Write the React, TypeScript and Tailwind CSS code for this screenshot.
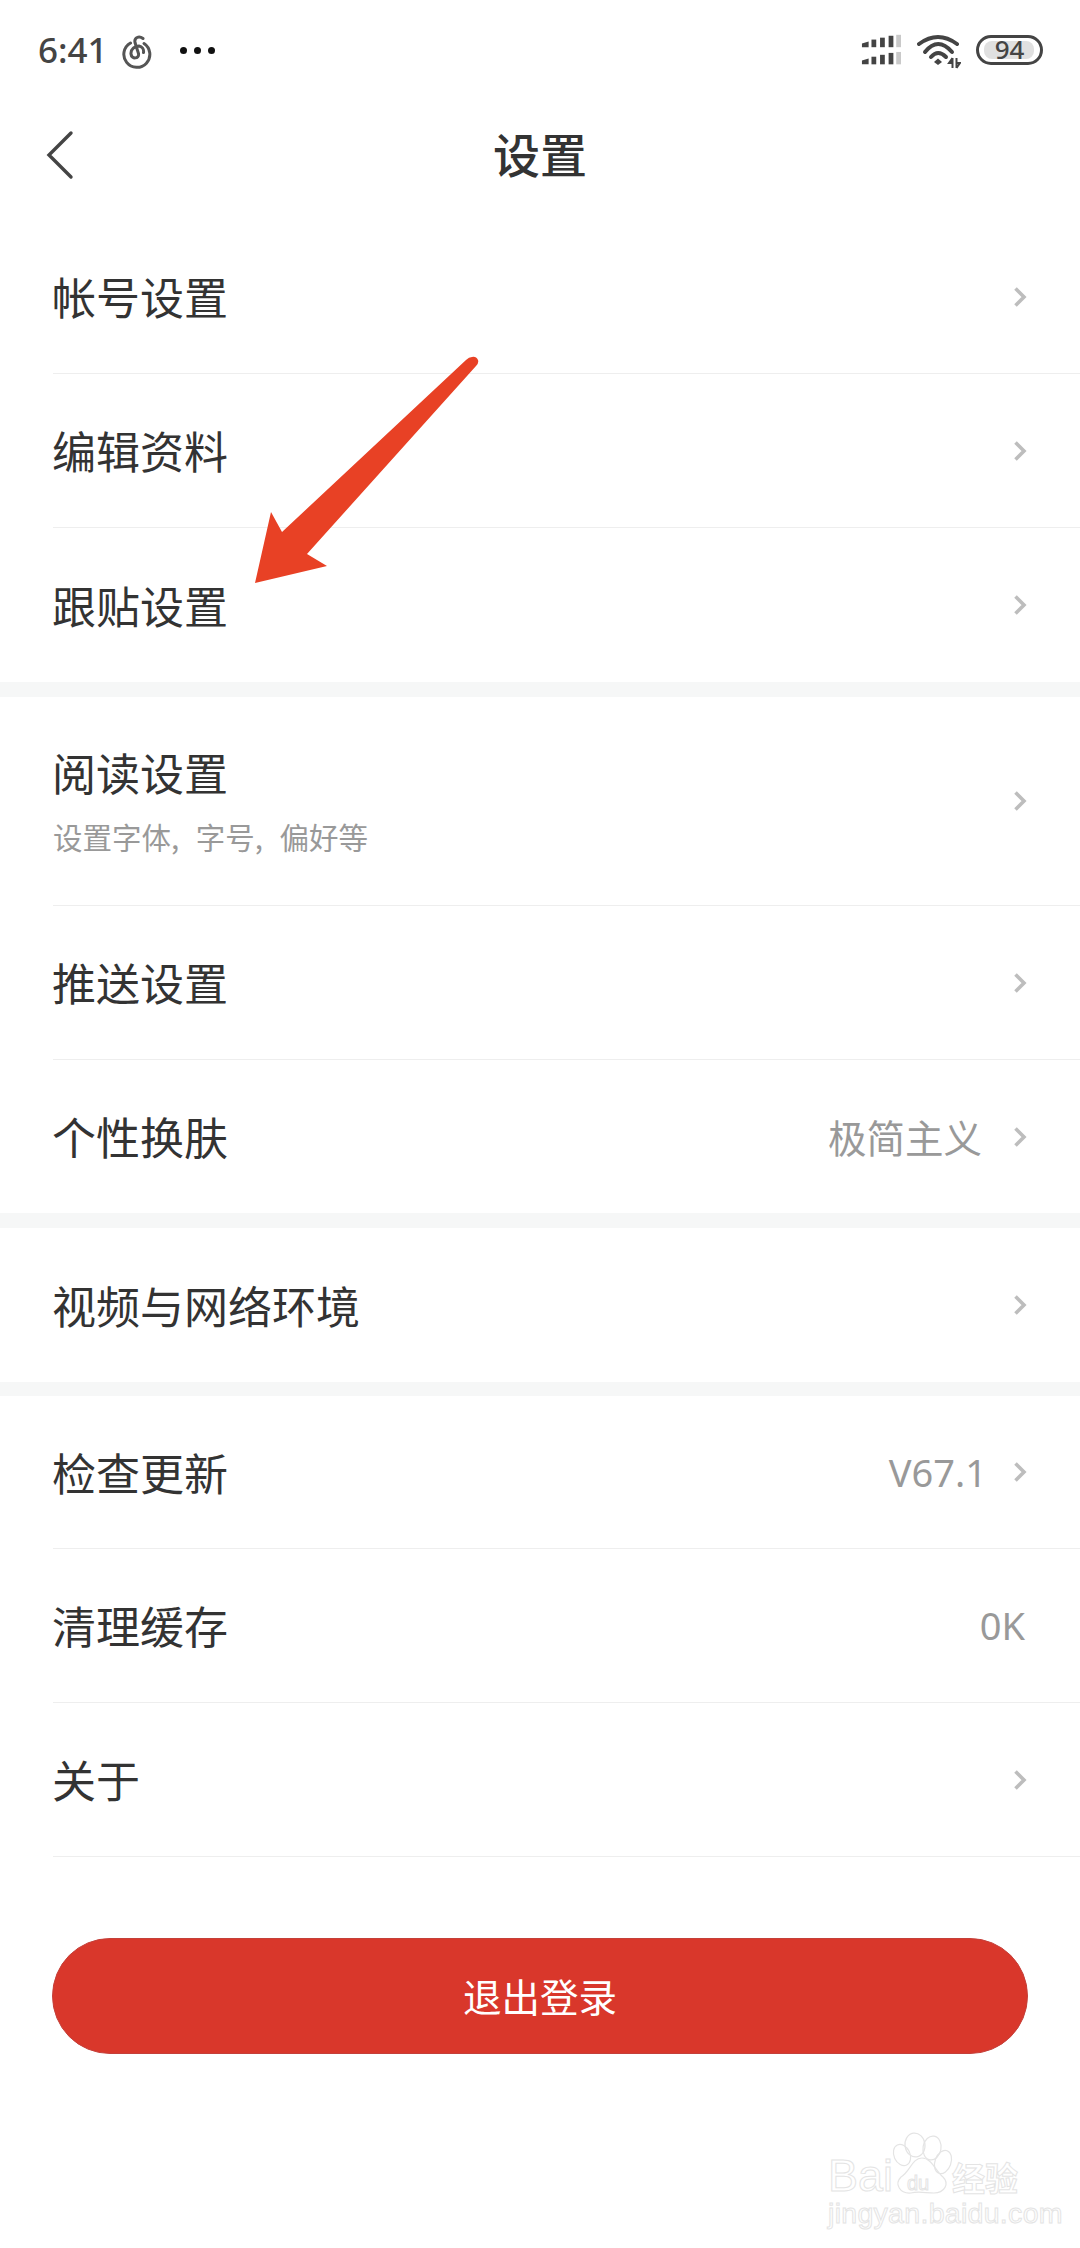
const CJK = "font-['Noto_Sans_CJK_SC','Noto_Sans',sans-serif]";

function Chevron() {
  return (
    <svg width="14" height="22" viewBox="0 0 14 22" fill="none" className="shrink-0">
      <path d="M2.5 2.5 L11 11 L2.5 19.5" stroke="#bdbdbd" strokeWidth="3.6" />
    </svg>
  );
}

function Row({
  title,
  sub,
  value,
  latin,
  noArrow,
  divider = true,
  height = "h-[154px]",
}: {
  title: string;
  sub?: string;
  value?: string;
  latin?: boolean;
  noArrow?: boolean;
  divider?: boolean;
  height?: string;
}) {
  const valueFont = latin
    ? "text-[38px] font-['Noto_Sans',sans-serif]"
    : "text-[38.5px] mr-[31px]";
  const valueGap = latin ? (noArrow ? "mr-[2px]" : "mr-[26px]") : "";
  return (
    <div className={`pl-[53px] ${height}`}>
      <div className={`h-full flex items-center pr-[53px] ${divider ? "border-b border-[#eeeeee]" : ""}`}>
        <div className={`flex-1 ${sub ? "pb-[3px]" : "pb-[1px]"}`}>
          <div className="text-[44px] leading-[60px] ml-[-1px] text-[#333333]">{title}</div>
          {sub && (
            <div className="text-[29.5px] leading-[44px] mt-[12px] text-[#999999] [word-spacing:10px]">{sub}</div>
          )}
        </div>
        {value && <span className={`text-[#999999] ${valueFont} ${valueGap}`}>{value}</span>}
        {!noArrow && <Chevron />}
      </div>
    </div>
  );
}

function Band({ height = "h-[15px]" }: { height?: string }) {
  return <div className={`${height} bg-[#f6f7f7]`} />;
}

function StatusBar() {
  return (
    <div className="h-[100px] flex items-center pl-[38px] pr-[37px]">
      <span className="text-[35px] font-medium text-[#444444] font-['Noto_Sans',sans-serif]">6:41</span>
      <svg width="30" height="34" viewBox="0 0 30 34" fill="none" className="ml-[14px] mt-[3px]">
        <path
          d="M8.5 8 A13 13 0 1 0 22 8.5 M21 3.5 C17 0.5 12 2.5 13 7.5 L16.5 18.5 C17.5 24 9.5 24.5 9 19 C8.5 14 13 11 17 11 C20 11.5 22 14 21.5 17.5"
          stroke="#555555"
          strokeWidth="3"
          strokeLinecap="round"
        />
      </svg>
      <div className="ml-[28px] flex gap-[7px]">
        <i className="block w-[7px] h-[7px] rounded-full bg-[#111111]" />
        <i className="block w-[7px] h-[7px] rounded-full bg-[#111111]" />
        <i className="block w-[7px] h-[7px] rounded-full bg-[#111111]" />
      </div>
      <div className="flex-1" />
      <svg width="40" height="34" viewBox="0 0 42 34" className="mt-[2px]">
        {[0, 18].map((y) => (
          <g key={y}>
            <path d={`M1 ${y + 9} L8 ${y + 7} V${y + 13} H1 Z`} fill="#444444" />
            <rect x="11" y={y + 5} width="5" height="8" fill="#444444" />
            <rect x="20" y={y + 3} width="5" height="10" fill="#444444" />
            <rect x="29" y={y + 1} width="5" height="12" fill="#444444" />
            <rect x="37" y={y} width="5" height="13" fill="#c9c9c9" />
          </g>
        ))}
      </svg>
      <svg width="44" height="36" viewBox="0 0 44 36" fill="none" className="ml-[16px] mt-[2px]">
        <path d="M2 11 Q21 -3 40 11" stroke="#444444" strokeWidth="4" strokeLinecap="round" />
        <path d="M8 19 Q21 3 35 19" stroke="#444444" strokeWidth="4" strokeLinecap="round" />
        <path d="M14 24 Q21 16 29 24" stroke="#444444" strokeWidth="4" strokeLinecap="round" />
        <path d="M17 29 L21 25.5 L25 29 L21 32 Z" fill="#444444" />
        <path d="M35.5 25 V35 M35.5 25 L32 30 H35.5 M39.5 35 V25 M39.5 35 L43 30 H39.5" stroke="#444444" strokeWidth="2" />
      </svg>
      <div className="ml-[15px] mt-[-1px] w-[67px] h-[30px] rounded-full border-[3px] border-[#444444] p-[3px] relative">
        <div className="h-full w-[90%] ml-[2px] rounded-[8px] bg-[#e0e0e0]" />
        <span className="absolute inset-0 flex items-center justify-center text-[26px] font-medium text-[#444444] font-['Noto_Sans',sans-serif]">
          94
        </span>
      </div>
    </div>
  );
}

function Watermark() {
  const outline = "text-transparent [-webkit-text-stroke:1px_#e4e4e4]";
  return (
    <div className="absolute left-[826px] top-[2130px] w-[200px] h-[98px] font-['Liberation_Sans',sans-serif]">
      <svg width="200" height="70" viewBox="0 0 200 70" fill="none" className="absolute left-0 top-0" stroke="#e4e4e4" strokeWidth="1.2">
        <ellipse cx="89" cy="15" rx="10" ry="12" transform="rotate(-8 89 15)" />
        <ellipse cx="76" cy="25" rx="8" ry="11" transform="rotate(-25 76 25)" />
        <ellipse cx="106" cy="18" rx="9" ry="12" transform="rotate(10 106 18)" />
        <ellipse cx="117" cy="32" rx="8" ry="12" transform="rotate(20 117 32)" />
        <path d="M96 28 C106 28 110 42 117 47 C124 54 118 63 108 63 C100 63 92 61 85 63 C74 64 68 54 75 47 C84 42 86 28 96 28 Z" />
      </svg>
      <span className={`absolute left-[2px] top-[19px] text-[45px] leading-[54px] ${outline}`}>Bai</span>
      <span className={`absolute left-[81px] top-[40px] text-[20px] leading-[26px] ${outline}`}>du</span>
      <span className={`absolute left-[126px] top-[27px] text-[33px] leading-[40px] font-bold ${outline} font-['Noto_Sans_CJK_SC',sans-serif]`}>经验</span>
      <span className={`absolute left-[2px] top-[66px] text-[28.5px] leading-[34px] tracking-[0.3px] ${outline}`}>jingyan.baidu.com</span>
    </div>
  );
}

export default function App() {
  return (
    <div className={`relative w-[1080px] h-[2248px] bg-white overflow-hidden ${CJK}`}>
      <StatusBar />

      <div className="h-[120px] relative flex items-center justify-center">
        <svg width="30" height="50" viewBox="0 0 30 50" fill="none" className="absolute left-[45px] top-[30px]">
          <path d="M26 3 L4 25 L26 47" stroke="#444444" strokeWidth="3.4" strokeLinecap="round" />
        </svg>
        <span className="text-[47px] font-medium text-[#333333] mt-[-13px]">设置</span>
      </div>

      <Row title="帐号设置" />
      <Row title="编辑资料" />
      <Row title="跟贴设置" divider={false} />
      <Band />
      <Row title="阅读设置" sub="设置字体, 字号, 偏好等" height="h-[209px]" />
      <Row title="推送设置" />
      <Row title="个性换肤" value="极简主义" divider={false} height="h-[153px]" />
      <Band />
      <Row title="视频与网络环境" divider={false} />
      <Band height="h-[14px]" />
      <Row title="检查更新" value="V67.1" latin height="h-[153px]" />
      <Row title="清理缓存" value="0K" latin noArrow />
      <Row title="关于" />

      <div className="mt-[81px] mx-[52px]">
        <button className="w-full h-[116px] rounded-full bg-[#d9372b] border border-[#c4403a] text-[38.5px] text-white">
          退出登录
        </button>
      </div>

      {/* red annotation arrow drawn over the list */}
      <svg width="1080" height="700" viewBox="0 0 1080 700" className="absolute left-0 top-0 pointer-events-none">
        <path
          d="M472 357 Q476 356 478 360 Q479 363 476 366 L307 554 L327 566 L255 583 L271 512 L282 532 L466 360 Q469 357 472 357 Z"
          fill="#e84125"
        />
      </svg>

      <Watermark />
    </div>
  );
}
